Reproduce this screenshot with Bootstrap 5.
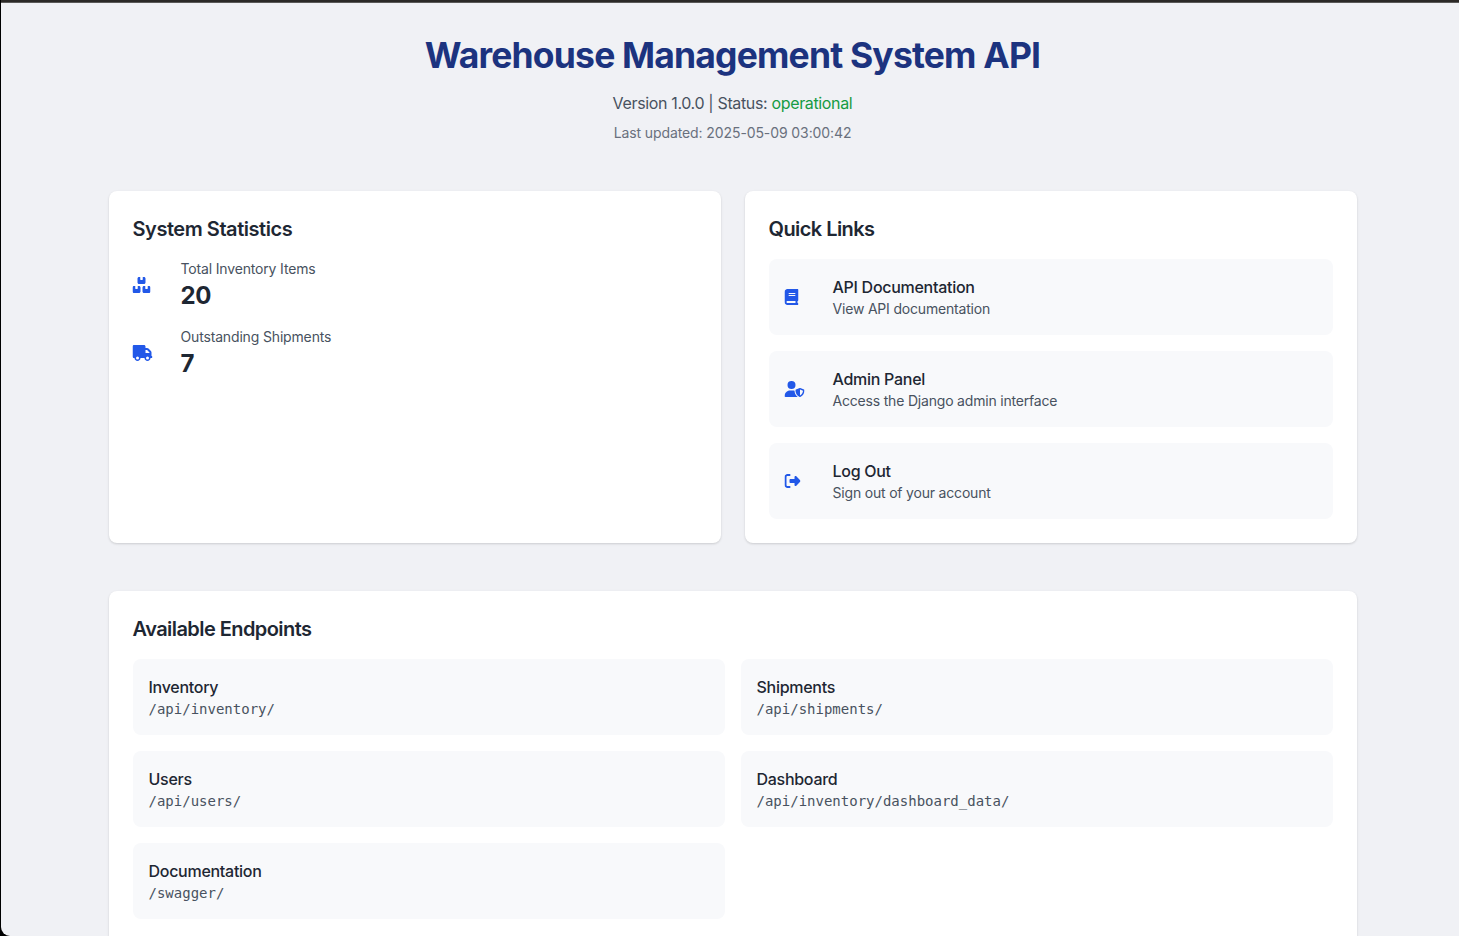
<!DOCTYPE html>
<html lang="en">
<head>
<meta charset="utf-8">
<meta name="viewport" content="width=device-width, initial-scale=1">
<title>Warehouse Management System API</title>
<link href="https://cdn.jsdelivr.net/npm/bootstrap@5.3.0/dist/css/bootstrap.min.css" rel="stylesheet">
<style>
body{font-family:Inter,"Liberation Sans",sans-serif;background:#000;color:#1e2733;height:936px;overflow:hidden}
.window-frame{height:936px;margin-left:1px;border-top:2px solid #2b2927;background:#f0f1f5;border-bottom-left-radius:9px;overflow:hidden}
.window-edge{height:1px;background:#5a5958}
.page-wrap{width:1280px;margin-left:91.500px;padding:32px 16px}
.page-title{font-size:35.500px;line-height:39px;padding-top:1px;font-weight:700;color:#1c337f;letter-spacing:-.83px}
.line-base{font-size:16px;line-height:24px;letter-spacing:-.28px}
.line-sm{font-size:14px;line-height:20px;letter-spacing:-.19px}
.version-line{letter-spacing:-.35px}
.updated-line{letter-spacing:-.1px}
.c-muted{color:#485260}
.c-soft{color:#69707d}
.c-ok{color:#169b43}
.panel{background:#fff;border-radius:8px;padding:24px;box-shadow:0 1px 3px rgba(0,0,0,.1),0 1px 2px rgba(0,0,0,.06)}
.panel h2{font-size:20px;line-height:28px;font-weight:600;margin-bottom:16px;letter-spacing:-.56px}
#stats h2{letter-spacing:-.45px}
#stats .line-sm{letter-spacing:-.16px}
.tile{background:#f8f9fb;border-radius:8px;padding:16px;color:inherit}
.tile-name{font-weight:500}
.icon-slot{width:48px;color:#2258e8;line-height:0}
.icon-slot svg{height:16px;fill:currentColor;transform:translateX(-.5px)}
.stat-value{font-size:24px;line-height:31px;padding-top:1px;font-weight:700;letter-spacing:-.4px}
.path-text{font-family:"DejaVu Sans Mono",monospace;letter-spacing:0}
</style>
</head>
<body>
<div class="window-frame">
<div class="window-edge"></div>
<main class="page-wrap">
  <header class="text-center mb-5">
    <h1 class="page-title mb-3">Warehouse Management System API</h1>
    <p class="line-base version-line c-muted mb-2">Version 1.0.0 | Status: <span class="c-ok">operational</span></p>
    <p class="line-sm updated-line c-soft mb-0">Last updated: 2025-05-09 03:00:42</p>
  </header>
  <div class="row gx-4 mb-5">
    <div class="col-6">
      <section class="panel h-100" id="stats">
        <h2>System Statistics</h2>
        <div class="d-flex align-items-center mb-3">
          <div class="icon-slot"><svg viewBox="0 0 576 512"><path d="M248 0H208c-26.500 0-48 21.500-48 48V176c0 26.500 21.500 48 48 48H368c26.500 0 48-21.500 48-48V48c0-26.500-21.500-48-48-48H328V80c0 8.800-7.200 16-16 16H264c-8.800 0-16-7.200-16-16V0zM48 288c-26.500 0-48 21.500-48 48V464c0 26.500 21.500 48 48 48H208c26.500 0 48-21.500 48-48V336c0-26.500-21.500-48-48-48H168v80c0 8.800-7.200 16-16 16H104c-8.800 0-16-7.200-16-16V288H48zM368 288c-26.500 0-48 21.500-48 48V464c0 26.500 21.500 48 48 48H528c26.500 0 48-21.500 48-48V336c0-26.500-21.500-48-48-48H488v80c0 8.800-7.200 16-16 16H424c-8.800 0-16-7.200-16-16V288H368z"/></svg></div>
          <div><div class="line-sm c-muted">Total Inventory Items</div><div class="stat-value">20</div></div>
        </div>
        <div class="d-flex align-items-center">
          <div class="icon-slot"><svg viewBox="0 0 640 512"><path d="M48 0C21.500 0 0 21.500 0 48V368c0 26.500 21.500 48 48 48H64c0 53 43 96 96 96s96-43 96-96H384c0 53 43 96 96 96s96-43 96-96h32c17.700 0 32-14.300 32-32s-14.300-32-32-32V288 256 237.300c0-17-6.700-33.300-18.700-45.300L512 114.700c-12-12-28.300-18.700-45.300-18.700H416V48c0-26.500-21.500-48-48-48H48zM416 160h50.700L544 237.300V256H416V160zM112 416a48 48 0 1 1 96 0 48 48 0 1 1-96 0zm368-48a48 48 0 1 1 0 96 48 48 0 1 1 0-96z"/></svg></div>
          <div><div class="line-sm c-muted">Outstanding Shipments</div><div class="stat-value">7</div></div>
        </div>
      </section>
    </div>
    <div class="col-6">
      <section class="panel h-100">
        <h2>Quick Links</h2>
        <nav class="d-flex flex-column gap-3">
          <a href="#" class="tile d-flex align-items-center text-decoration-none">
            <div class="icon-slot"><svg viewBox="0 0 448 512"><path d="M96 0C43 0 0 43 0 96V416c0 53 43 96 96 96H384h32c17.700 0 32-14.300 32-32s-14.300-32-32-32V384c17.700 0 32-14.300 32-32V32c0-17.700-14.300-32-32-32H384 96zm0 384H352v64H96c-17.700 0-32-14.300-32-32s14.300-32 32-32zm32-240c0-8.800 7.200-16 16-16H336c8.800 0 16 7.200 16 16s-7.200 16-16 16H144c-8.800 0-16-7.200-16-16zm16 48H336c8.800 0 16 7.200 16 16s-7.200 16-16 16H144c-8.800 0-16-7.200-16-16s7.200-16 16-16z"/></svg></div>
            <div><div class="line-base tile-name">API Documentation</div><div class="line-sm c-muted">View API documentation</div></div>
          </a>
          <a href="#" class="tile d-flex align-items-center text-decoration-none">
            <div class="icon-slot"><svg viewBox="0 0 640 512"><path d="M224 256A128 128 0 1 0 224 0a128 128 0 1 0 0 256zm-45.700 48C79.800 304 0 383.800 0 482.300C0 498.700 13.300 512 29.700 512H418.300c1.800 0 3.500-.2 5.300-.5c-76.300-55.100-99.800-141-103.100-200.200c-16.100-4.800-33.100-7.300-50.700-7.300H178.300zm308.800-78.300l-120 48C358 277.400 352 286.200 352 296c0 63.300 25.900 168.800 134.800 214.200c5.900 2.500 12.600 2.500 18.500 0C614.100 464.800 640 359.300 640 296c0-9.800-6-18.600-15.100-22.300l-120-48c-5.700-2.300-12.100-2.300-17.800 0zM591.400 312c-3.900 50.700-27.200 116.700-95.400 149.700V273.800L591.400 312z"/></svg></div>
            <div><div class="line-base tile-name">Admin Panel</div><div class="line-sm c-muted">Access the Django admin interface</div></div>
          </a>
          <a href="#" class="tile d-flex align-items-center text-decoration-none">
            <div class="icon-slot"><svg viewBox="0 0 512 512"><path d="M377.900 105.900L500.700 228.700c7.200 7.200 11.300 17.100 11.300 27.300s-4.100 20.100-11.300 27.300L377.900 406.100c-6.400 6.400-15 9.900-24 9.900c-18.700 0-33.900-15.200-33.900-33.900l0-62.100-128 0c-17.700 0-32-14.300-32-32l0-64c0-17.700 14.300-32 32-32l128 0 0-62.100c0-18.700 15.200-33.900 33.900-33.900c9 0 17.600 3.600 24 9.900zM160 96L96 96c-17.700 0-32 14.300-32 32l0 256c0 17.700 14.300 32 32 32l64 0c17.700 0 32 14.300 32 32s-14.300 32-32 32l-64 0c-53 0-96-43-96-96L0 128C0 75 43 32 96 32l64 0c17.700 0 32 14.300 32 32s-14.300 32-32 32z"/></svg></div>
            <div><div class="line-base tile-name">Log Out</div><div class="line-sm c-muted">Sign out of your account</div></div>
          </a>
        </nav>
      </section>
    </div>
  </div>
  <section class="panel">
    <h2>Available Endpoints</h2>
    <div class="row g-3">
      <div class="col-6"><div class="tile"><div class="line-base tile-name">Inventory</div><div class="line-sm c-muted path-text">/api/inventory/</div></div></div>
      <div class="col-6"><div class="tile"><div class="line-base tile-name">Shipments</div><div class="line-sm c-muted path-text">/api/shipments/</div></div></div>
      <div class="col-6"><div class="tile"><div class="line-base tile-name">Users</div><div class="line-sm c-muted path-text">/api/users/</div></div></div>
      <div class="col-6"><div class="tile"><div class="line-base tile-name">Dashboard</div><div class="line-sm c-muted path-text">/api/inventory/dashboard_data/</div></div></div>
      <div class="col-6"><div class="tile"><div class="line-base tile-name">Documentation</div><div class="line-sm c-muted path-text">/swagger/</div></div></div>
    </div>
  </section>
</main>
</div>
<script src="https://cdn.jsdelivr.net/npm/bootstrap@5.3.0/dist/js/bootstrap.bundle.min.js"></script>
</body>
</html>
